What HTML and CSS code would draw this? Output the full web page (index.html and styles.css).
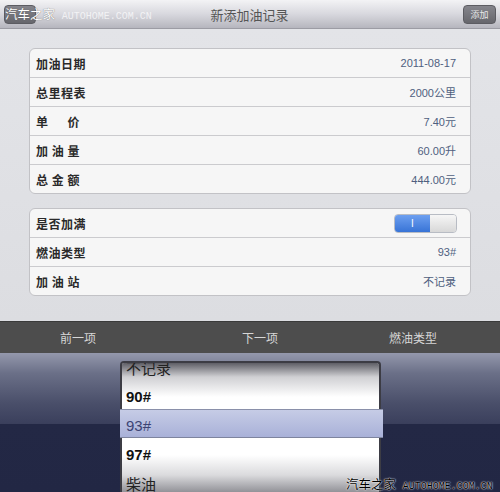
FILE: index.html
```html
<!DOCTYPE html>
<html lang="zh-CN">
<head>
  <meta charset="UTF-8" />
  <meta name="viewport" content="width=device-width, initial-scale=1.0"/>
  <title>新添加油记录</title>
  <link rel="stylesheet" href="styles.css">
</head>
<body>
  <div class="screen">
    <header class="navbar">
      <button class="nav-btn back-btn"></button>
      <h1>新添加油记录</h1>
      <button class="nav-btn add-btn">添加</button>
    </header>

    <main class="form">
      <section class="group">
        <div class="row"><span class="label">加油日期</span><span class="value">2011-08-17</span></div>
        <div class="row"><span class="label">总里程表</span><span class="value">2000公里</span></div>
        <div class="row"><span class="label">单&emsp;&ensp;价</span><span class="value">7.40元</span></div>
        <div class="row"><span class="label">加 油 量</span><span class="value">60.00升</span></div>
        <div class="row"><span class="label">总 金 额</span><span class="value">444.00元</span></div>
      </section>

      <section class="group">
        <div class="row">
          <span class="label">是否加满</span>
          <span class="toggle"><span class="toggle-on">I</span><span class="toggle-off"></span></span>
        </div>
        <div class="row"><span class="label">燃油类型</span><span class="value">93#</span></div>
        <div class="row"><span class="label">加 油 站</span><span class="value">不记录</span></div>
      </section>
    </main>

    <div class="toolbar">
      <span>前一项</span>
      <span>下一项</span>
      <span>燃油类型</span>
    </div>

    <div class="picker">
      <div class="wheel">
        <div class="wheel-shade"></div>
        <ul class="wheel-list">
          <li class="cjk">不记录</li>
          <li>90#</li>
          <li class="selected">93#</li>
          <li>97#</li>
          <li class="cjk">柴油</li>
        </ul>
      </div>
      <div class="selection-bar"></div>
    </div>

    <div class="watermark top-mark">汽车之家 <span>AUTOHOME.COM.CN</span></div>
    <div class="watermark bottom-mark">汽车之家 <span>AUTOHOME.COM.CN</span></div>
  </div>
</body>
</html>
```

FILE: styles.css
```css
body {
  margin: 0;
  font-family: "Liberation Sans", "Noto Sans CJK SC", sans-serif;
  background: #dfe0e4;
}

.screen {
  position: relative;
  width: 500px;
  height: 492px;
  overflow: hidden;
}

/* nav bar */
.navbar {
  height: 28px;
  display: flex;
  align-items: center;
  justify-content: space-between;
  padding: 0 4px;
  background: linear-gradient(#f3f3f5, #d8d8de 50%, #b6b6be);
  border-bottom: 1px solid #9c9ca4;
}

.navbar h1 {
  margin: 0;
  font-size: 13px;
  font-weight: normal;
  color: #555;
  font-family: "Noto Sans CJK SC", sans-serif;
}

.nav-btn {
  height: 19px;
  border: 1px solid #5c5c62;
  border-radius: 4px;
  background: linear-gradient(#85858c, #66666c);
  color: #e8e8e8;
  font-size: 9px;
  padding: 0;
  font-family: "Noto Sans CJK SC", sans-serif;
}

.back-btn {
  width: 32px;
  margin-top: 1px;
}

.add-btn {
  width: 33px;
}

/* form groups */
.form {
  height: 292px;
  box-sizing: border-box;
  padding: 19px 29px 0;
  background: linear-gradient(#e3e4e8, #dcdde1);
}

.group {
  background: #f6f6f6;
  border: 1px solid #c2c2c6;
  border-radius: 6px;
  margin-bottom: 14px;
}

.row {
  height: 28px;
  display: flex;
  align-items: center;
  justify-content: space-between;
  padding: 0 14px 0 6px;
  border-top: 1px solid #cbcbce;
}

.row:first-child {
  border-top: none;
}

.label {
  font-family: "Noto Sans CJK SC", sans-serif;
  font-size: 12px;
  font-weight: bold;
  color: #2a2a2a;
  letter-spacing: 0.5px;
  white-space: pre;
}

.value {
  font-size: 11px;
  color: #4f5f80;
}

.toggle {
  display: flex;
  width: 61px;
  height: 17px;
  border: 1px solid #b8bcc4;
  border-radius: 4px;
  overflow: hidden;
  margin-right: -1px;
}

.toggle-on {
  width: 35px;
  background: linear-gradient(#6d9ff0, #3874d6);
  color: #fff;
  font-size: 10px;
  text-align: center;
  line-height: 17px;
}

.toggle-off {
  flex: 1;
  background: linear-gradient(#f6f6f6, #d8d8d8);
}

/* toolbar */
.toolbar {
  height: 31px;
  display: grid;
  grid-template-columns: 156px 208px 98px 1fr;
  align-items: center;
  background: #4d4d4d;
  border-top: 1px solid #3a3a3a;
  color: #d6d6d6;
  font-family: "Noto Sans CJK SC", sans-serif;
  font-size: 12px;
}

.toolbar span {
  text-align: center;
}

/* picker */
.picker {
  position: relative;
  height: 139px;
  padding-top: 8px;
  box-sizing: border-box;
  background: linear-gradient(#9498ac 0, #6b7088 20px, #4a4f6a 50px, #3a3f5c 71px, #232845 71px, #222744 100%);
}

.wheel {
  position: relative;
  margin-left: 120px;
  width: 257px;
  height: 131px;
  border: 2px solid #3c3c44;
  border-bottom: none;
  border-radius: 4px 4px 0 0;
  background: #fff;
  overflow: hidden;
}

.wheel-list {
  position: relative;
  z-index: 2;
  list-style: none;
  margin: -10px 0 0;
  padding: 0;
}

.wheel-list li {
  height: 29px;
  line-height: 29px;
  padding-left: 4px;
  font-size: 15px;
  font-weight: bold;
  color: #111;
}

.wheel-list li.cjk {
  font-family: "Noto Sans CJK SC", sans-serif;
  font-weight: normal;
  font-size: 15px;
  color: #222;
}

.wheel-list li.selected {
  font-weight: normal;
  color: #3c4474;
}

.wheel-shade {
  position: absolute;
  inset: 0;
  background: linear-gradient(rgba(40, 40, 50, 0.75) 0, rgba(120, 120, 130, 0.35) 14px, rgba(255, 255, 255, 0) 34px, rgba(255, 255, 255, 0) 92px, rgba(110, 110, 120, 0.25) 112px, rgba(60, 60, 70, 0.6) 131px);
}

.selection-bar {
  position: absolute;
  z-index: 1;
  left: 120px;
  top: 56px;
  width: 263px;
  height: 27px;
  border-top: 1px solid #8a90aa;
  border-bottom: 1px solid #7e849e;
  background: linear-gradient(#c6cce6, #a9b1d8);
}

/* watermarks */
.watermark {
  position: absolute;
  z-index: 3;
  font-family: "Noto Sans CJK SC", sans-serif;
  font-size: 12.5px;
  white-space: nowrap;
}

.watermark span {
  margin-left: 4px;
  font-family: "Liberation Mono", monospace;
  font-size: 10px;
}

.top-mark {
  left: 5px;
  top: 4px;
  color: #fff;
  text-shadow: 0 0 1px #555;
}

.top-mark span {
  color: rgba(255, 255, 255, 0.7);
  text-shadow: none;
}

.bottom-mark {
  left: 346px;
  top: 474px;
  color: #000;
  text-shadow: 0 0 2px #fff, 0 0 1px #fff;
}
```
